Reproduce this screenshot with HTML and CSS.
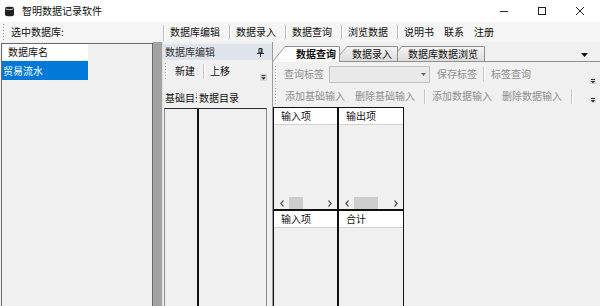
FILE: index.html
```html
<!DOCTYPE html>
<html lang="zh-CN">
<head>
    <meta charset="UTF-8">
    <meta name="viewport" content="width=device-width, initial-scale=1.0">
    <title>智明数据记录软件</title>
    <link rel="stylesheet" href="styles.css">
</head>
<body>
<div class="window">
    <!-- 标题栏 -->
    <div class="titlebar">
        <svg class="app-icon" width="9" height="11" viewBox="0 0 9 11">
            <path d="M0 2C0 0.2 9 0.2 9 2V9C9 10.8 0 10.8 0 9Z" fill="#222"/>
            <path d="M0.6 2.7C1.6 3.9 7.4 3.9 8.4 2.7" fill="none" stroke="#fff" stroke-width="0.8"/>
        </svg>
        <span class="title">智明数据记录软件</span>
        <div class="controls">
            <span class="ctl"><svg width="10" height="10"><path d="M1 5.5H9" stroke="#222"/></svg></span>
            <span class="ctl"><svg width="10" height="10"><rect x="1.5" y="1.5" width="7" height="7" fill="none" stroke="#222"/></svg></span>
            <span class="ctl"><svg width="10" height="10"><path d="M1 1L9 9M9 1L1 9" stroke="#222"/></svg></span>
        </div>
    </div>

    <!-- 菜单栏 -->
    <div class="menubar">
        <div class="db-pick">
            <span class="grip"></span>
            <span class="pick-label">选中数据库:</span>
        </div>
        <span class="menu-sep first"></span>
        <div class="menu">
            <span class="menu-item">数据库编辑</span>
            <span class="menu-sep"></span>
            <span class="menu-item">数据录入</span>
            <span class="menu-sep"></span>
            <span class="menu-item">数据查询</span>
            <span class="menu-sep"></span>
            <span class="menu-item">浏览数据</span>
            <span class="menu-sep"></span>
            <span class="menu-item">说明书</span>
            <span class="menu-item">联系</span>
            <span class="menu-item">注册</span>
        </div>
    </div>

    <div class="main">
        <!-- 数据库列表 -->
        <div class="dblist">
            <div class="db-head">数据库名</div>
            <div class="db-row selected">贸易流水</div>
        </div>
        <div class="splitter"></div>

        <!-- 数据库编辑面板 -->
        <div class="editor">
            <div class="ed-head">
                <span>数据库编辑</span>
                <svg class="pin" width="7" height="9" viewBox="0 0 7 9">
                    <path d="M2 0.5H5V5H2Z" fill="none" stroke="#222"/>
                    <path d="M4.2 1V5" stroke="#222"/>
                    <path d="M0 5.5H7" stroke="#222"/>
                    <path d="M3.5 6V9" stroke="#222"/>
                </svg>
            </div>
            <div class="ed-tools">
                <span class="grip"></span>
                <span class="tool-btn on first">新建</span>
                <span class="tool-sep ed"></span>
                <span class="tool-btn on">上移</span>
                <svg class="overflow ed" width="7" height="7" viewBox="0 0 7 7">
                    <rect width="7" height="7" fill="#d8d8d8"/>
                    <path d="M1.5 1.5H5.5" stroke="#333"/>
                    <path d="M1.2 3.3H5.8L3.5 5.8Z" fill="#333"/>
                </svg>
            </div>
            <div class="ed-labels">
                <span class="ed-label clip">基础目录</span>
                <span class="ed-label">数据目录</span>
            </div>
            <div class="ed-boxes">
                <div class="ed-box base"></div>
                <div class="ed-box data"></div>
            </div>
        </div>

        <!-- 工作区 -->
        <div class="workspace">
            <div class="tabs">
                <span class="tab active">数据查询</span>
                <span class="tab t2">数据录入</span>
                <span class="tab t3">数据库数据浏览</span>
                <svg class="tab-menu" width="7" height="4" viewBox="0 0 7 4"><path d="M0 0H7L3.5 4Z" fill="#111"/></svg>
            </div>

            <div class="tstrip row1">
                <span class="grip"></span>
                <span class="tool-btn lbl">查询标签</span>
                <span class="combo">
                    <svg width="5" height="3" viewBox="0 0 5 3"><path d="M0 0H5L2.5 3Z" fill="#666"/></svg>
                </span>
                <span class="tool-btn save">保存标签</span>
                <span class="tool-sep r1"></span>
                <span class="tool-btn">标签查询</span>
                <svg class="overflow r1" width="6" height="6" viewBox="0 0 6 6">
                    <rect width="6" height="6" fill="#dcdcdc"/>
                    <path d="M1 1.5H5" stroke="#333"/>
                    <path d="M0.8 3H5.2L3 5.5Z" fill="#333"/>
                </svg>
            </div>

            <div class="tstrip row2">
                <span class="grip"></span>
                <span class="tool-btn first">添加基础输入</span>
                <span class="tool-btn">删除基础输入</span>
                <span class="tool-sep"></span>
                <span class="tool-btn">添加数据输入</span>
                <span class="tool-btn">删除数据输入</span>
                <span class="tool-sep"></span>
                <svg class="overflow r2" width="6" height="6" viewBox="0 0 6 6">
                    <rect width="6" height="6" fill="#dcdcdc"/>
                    <path d="M1 1.5H5" stroke="#333"/>
                    <path d="M0.8 3H5.2L3 5.5Z" fill="#333"/>
                </svg>
            </div>

            <div class="grids">
                <div class="grid">
                    <div class="grid-head">输入项</div>
                    <div class="grid-body"></div>
                    <div class="hscroll">
                        <span class="sb-btn"><svg width="4" height="7"><path d="M3.5 0.5L0.8 3.5L3.5 6.5" fill="none" stroke="#555" stroke-width="1.2"/></svg></span>
                        <span class="sb-track"><span class="sb-thumb small"></span></span>
                        <span class="sb-btn"><svg width="4" height="7"><path d="M0.5 0.5L3.2 3.5L0.5 6.5" fill="none" stroke="#555" stroke-width="1.2"/></svg></span>
                    </div>
                </div>
                <div class="grid">
                    <div class="grid-head">输出项</div>
                    <div class="grid-body"></div>
                    <div class="hscroll">
                        <span class="sb-btn"><svg width="4" height="7"><path d="M3.5 0.5L0.8 3.5L3.5 6.5" fill="none" stroke="#555" stroke-width="1.2"/></svg></span>
                        <span class="sb-track"><span class="sb-thumb wide"></span></span>
                        <span class="sb-btn"><svg width="4" height="7"><path d="M0.5 0.5L3.2 3.5L0.5 6.5" fill="none" stroke="#555" stroke-width="1.2"/></svg></span>
                    </div>
                </div>
                <div class="grid">
                    <div class="grid-head">输入项</div>
                    <div class="grid-body"></div>
                </div>
                <div class="grid">
                    <div class="grid-head">合计</div>
                    <div class="grid-body"></div>
                </div>
            </div>
        </div>
    </div>
</div>
</body>
</html>
```

FILE: styles.css
```css
* {
    box-sizing: border-box;
}
body {
    margin: 0;
    font-family: "Noto Sans CJK SC", "Noto Sans", sans-serif;
    font-size: 10px;
    line-height: 14px;
    color: #111;
}
.window {
    width: 600px;
    height: 306px;
    display: flex;
    flex-direction: column;
    background: #f0f0f0;
    overflow: hidden;
}

/* 标题栏 */
.titlebar {
    flex: none;
    height: 22px;
    display: flex;
    align-items: center;
    background: #fff;
}
.app-icon {
    margin-left: 5px;
}
.title {
    margin-left: 8px;
}
.controls {
    display: flex;
    margin-left: auto;
    margin-right: 1px;
}
.ctl {
    width: 38px;
    height: 22px;
    display: flex;
    align-items: center;
    justify-content: center;
}

/* 拖动把手 */
.grip {
    flex: none;
    width: 1px;
    height: 16px;
    background: repeating-linear-gradient(to bottom, #999 0 1px, transparent 1px 3px);
    box-shadow: 1px 1px 0 #fff;
}

/* 菜单栏 */
.menubar {
    flex: none;
    height: 20px;
    display: flex;
    align-items: center;
    background: #f5f5f5;
}
.db-pick {
    width: 163px;
    display: flex;
    align-items: center;
}
.db-pick .grip {
    margin-left: 3px;
}
.pick-label {
    margin-left: 7px;
}
.menu {
    display: flex;
    align-items: center;
    margin-left: 1px;
}
.menu-item {
    padding: 0 5px;
}
.menu-sep {
    width: 1px;
    height: 14px;
    margin: 0 1px 0 4px;
    background: #bdbdbd;
    box-shadow: 1px 0 0 #fff;
}
.menu-sep.first {
    margin: 2px 0 0 0;
    height: 16px;
}

.main {
    flex: 1;
    min-height: 0;
    display: flex;
}

/* 数据库列表 */
.dblist {
    flex: none;
    width: 152px;
    margin: 1px 0 0 1px;
    border: 1px solid #6b6b6b;
    border-bottom: none;
    background: #f0f0f0;
}
.db-head {
    width: 85px;
    height: 16px;
    margin-left: 1px;
    padding-left: 5px;
    line-height: 16px;
    background: #fff;
}
.db-row {
    width: 86px;
    height: 19px;
    margin-top: 1px;
    padding-left: 1px;
    line-height: 19px;
}
.db-row.selected {
    background: #0078d7;
    color: #fff;
}

.splitter {
    flex: none;
    width: 10px;
    background: #a3a3a3;
    border-right: 1px solid #dedede;
}

/* 数据库编辑面板 */
.editor {
    flex: none;
    width: 109px;
    display: flex;
    flex-direction: column;
    padding-top: 2px;
}
.ed-head {
    height: 16px;
    display: flex;
    align-items: center;
    justify-content: space-between;
    padding: 0 8px 0 2px;
    background: #dde4ec;
    color: #333;
}
.ed-tools {
    height: 22px;
    display: flex;
    align-items: center;
    padding-left: 2px;
}
.tool-btn {
    flex: none;
    padding: 0 5px;
    color: #8e8e8e;
    white-space: nowrap;
}
.tool-btn.on {
    color: #111;
}
.ed-tools .tool-btn.first {
    margin-left: 4px;
}
.tool-sep {
    flex: none;
    width: 1px;
    height: 15px;
    margin: 0 2px 0 4px;
    background: #c4c4c4;
    box-shadow: 1px 0 0 #fff;
}
.tool-sep.ed {
    margin: 0 1px 0 3px;
}
.tool-sep.r1 {
    margin: 0 2px 0 1px;
}
.overflow {
    flex: none;
    margin-left: auto;
    align-self: flex-end;
}
.overflow.ed {
    margin-right: 5px;
    margin-bottom: 1px;
}
.overflow.r1 {
    margin-right: 4px;
    margin-bottom: 2px;
}
.overflow.r2 {
    margin-right: 4px;
    margin-bottom: 3px;
}
.ed-labels {
    height: 26px;
    display: flex;
    padding: 9px 0 0 2px;
}
.ed-label {
    white-space: nowrap;
}
.ed-label.clip {
    width: 32px;
    overflow: hidden;
    margin-right: 2px;
}
.ed-boxes {
    flex: 1;
    display: flex;
    padding-left: 1px;
}
.ed-box {
    border-top: 1px solid #2b2b2b;
}
.ed-box.base {
    width: 35px;
    border-left: 1px solid #8c8c8c;
    border-right: 2px solid #111;
}
.ed-box.data {
    width: 68px;
    border-right: 1px solid #8c8c8c;
}

/* 工作区 */
.workspace {
    flex: 1;
    min-width: 0;
    display: flex;
    flex-direction: column;
    border-left: 1px solid #9c9c9c;
    overflow: hidden;
}
.tabs {
    flex: none;
    height: 19px;
    margin-top: 1px;
    padding-left: 12px;
    display: flex;
    align-items: flex-end;
    border-bottom: 1px solid #8f8f8f;
}
.tab {
    position: relative;
    height: 15px;
    line-height: 14px;
    border-top: 1px solid #8f8f8f;
    border-right: 1px solid #8f8f8f;
    border-radius: 0 2px 0 0;
    background: linear-gradient(#f4f4f4, #dcdcdc);
    white-space: nowrap;
}
/* 斜边 */
.tab::before {
    content: '';
    position: absolute;
    left: -13px;
    top: -1px;
    bottom: 0;
    width: 13px;
    background: #8f8f8f;
    clip-path: polygon(100% 0, 100% 100%, 0 100%);
}
.tab::after {
    content: '';
    position: absolute;
    left: -12px;
    top: 0;
    bottom: 0;
    width: 12px;
    background: inherit;
    clip-path: polygon(100% 0, 100% 100%, 0 100%);
}
.tab.active {
    z-index: 3;
    width: 55px;
    height: 16px;
    margin-bottom: -1px;
    padding-left: 11px;
    background: #fcfcfc;
    font-weight: bold;
}
.tab.t2 {
    z-index: 2;
    width: 51px;
    margin-left: 7px;
    padding-left: 5px;
}
.tab.t3 {
    z-index: 1;
    width: 83px;
    margin-left: 4px;
    padding-left: 6px;
}
.tab-menu {
    margin-left: auto;
    margin-right: 12px;
    margin-bottom: 4px;
}

.tstrip {
    flex: none;
    display: flex;
    align-items: center;
    padding-left: 2px;
}
.tstrip.row1 {
    height: 24px;
}
.tstrip.row2 {
    height: 20px;
}
.tool-btn.lbl {
    margin-left: 3px;
}
.row2 .tool-btn.first {
    margin-left: 4px;
}
.tool-btn.save {
    margin-left: 2px;
}
.combo {
    flex: none;
    width: 101px;
    height: 17px;
    display: flex;
    align-items: center;
    justify-content: flex-end;
    padding-right: 3px;
    border: 1px solid #c2c2c2;
    background: #e9e9e9;
}

/* 数据表格 */
.grids {
    flex: none;
    margin-top: 1px;
    display: grid;
    grid-template-columns: 65px 66px;
    grid-template-rows: 103px 120px;
}
.grid {
    display: flex;
    flex-direction: column;
    border: 1px solid #111;
    background: #f0f0f0;
}
.grid-head {
    height: 17px;
    padding-left: 7px;
    line-height: 16px;
    background: #fff;
    border-bottom: 1px solid #d3d3d3;
}
.grid-body {
    flex: 1;
}
.hscroll {
    height: 12px;
    display: flex;
}
.sb-btn {
    width: 15px;
    display: flex;
    align-items: center;
    justify-content: center;
}
.sb-track {
    flex: 1;
    display: flex;
}
.sb-thumb {
    background: #cdcdcd;
}
.sb-thumb.small {
    width: 14px;
}
.sb-thumb.wide {
    width: 24px;
}
```
